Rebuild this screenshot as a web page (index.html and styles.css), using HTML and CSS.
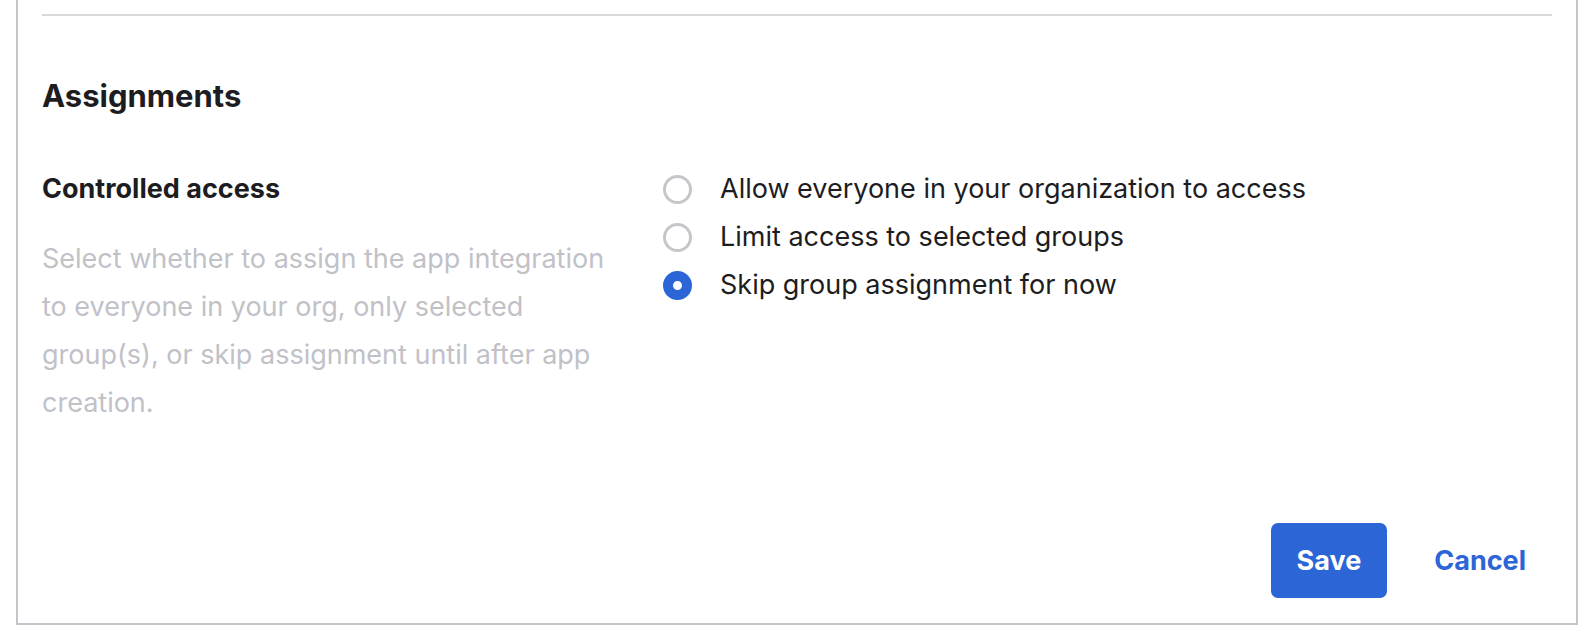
FILE: index.html
```html
<!DOCTYPE html>
<html lang="en">
<head>
  <meta charset="UTF-8">
  <title>Assignments</title>
  <link rel="stylesheet" href="styles.css">
</head>
<body>
  <div class="panel">
    <hr class="divider">

    <h2 class="section-title">Assignments</h2>

    <div class="field">
      <div class="field-info">
        <h3 class="field-label">Controlled access</h3>
        <p class="field-hint">Select whether to assign the app integration to everyone in your org, only selected group(s), or skip assignment until after app creation.</p>
      </div>

      <div class="radio-group">
        <label class="radio">
          <input type="radio" name="access" value="everyone">
          <span class="radio-mark"></span>
          <span class="radio-text">Allow everyone in your organization to access</span>
        </label>
        <label class="radio">
          <input type="radio" name="access" value="groups">
          <span class="radio-mark"></span>
          <span class="radio-text">Limit access to selected groups</span>
        </label>
        <label class="radio">
          <input type="radio" name="access" value="skip" checked>
          <span class="radio-mark"></span>
          <span class="radio-text">Skip group assignment for now</span>
        </label>
      </div>
    </div>

    <div class="actions">
      <button class="btn btn-primary">Save</button>
      <button class="btn btn-link">Cancel</button>
    </div>
  </div>
</body>
</html>
```

FILE: styles.css
```css
body {
  margin: 0;
  background-color: #ffffff;
  font-family: 'Inter', 'Noto Sans', sans-serif;
  color: #1d1d21;
}
.panel {
  margin: 0 14px 15px 16px;
  padding: 14px 24px 25px 24px;
  border: 2px solid #c5c4ca;
  border-top: none;
}
.divider {
  margin: 0;
  height: 2px;
  border: none;
  background-color: #d8d8dd;
}
.section-title {
  margin: 61px 0 0 0;
  font-size: 31px;
  line-height: 38px;
  font-weight: 700;
}
.field {
  margin-top: 57px;
  display: grid;
  grid-template-columns: 598px 1fr;
  gap: 24px;
}
.field-label {
  margin: 0;
  font-size: 27px;
  line-height: 34px;
  font-weight: 700;
}
.field-hint {
  max-width: 580px;
  margin: 29px 0 0 0;
  font-size: 27px;
  line-height: 48px;
  color: #c1c1c8;
}
.radio-group {
  display: flex;
  flex-direction: column;
  gap: 14px;
}
.radio {
  display: flex;
  align-items: center;
  gap: 28px;
  margin-left: -1px;
  font-size: 27px;
  line-height: 34px;
  cursor: pointer;
}
.radio input {
  display: none;
}
.radio-mark {
  flex: none;
  width: 29px;
  height: 29px;
  box-sizing: border-box;
  border: 3px solid #c5c5ca;
  border-radius: 50%;
}
.radio input:checked + .radio-mark {
  border: 10px solid #2c65d6;
}
.actions {
  margin-top: 96px;
  display: flex;
  justify-content: flex-end;
  gap: 21px;
}
.btn {
  padding: 0 26px;
  height: 75px;
  border: none;
  border-radius: 7px;
  font-family: inherit;
  font-size: 27px;
  font-weight: 700;
  cursor: pointer;
}
.btn-primary {
  background-color: #2c65d6;
  color: #ffffff;
}
.btn-link {
  background: none;
  color: #2c65d6;
}
```
